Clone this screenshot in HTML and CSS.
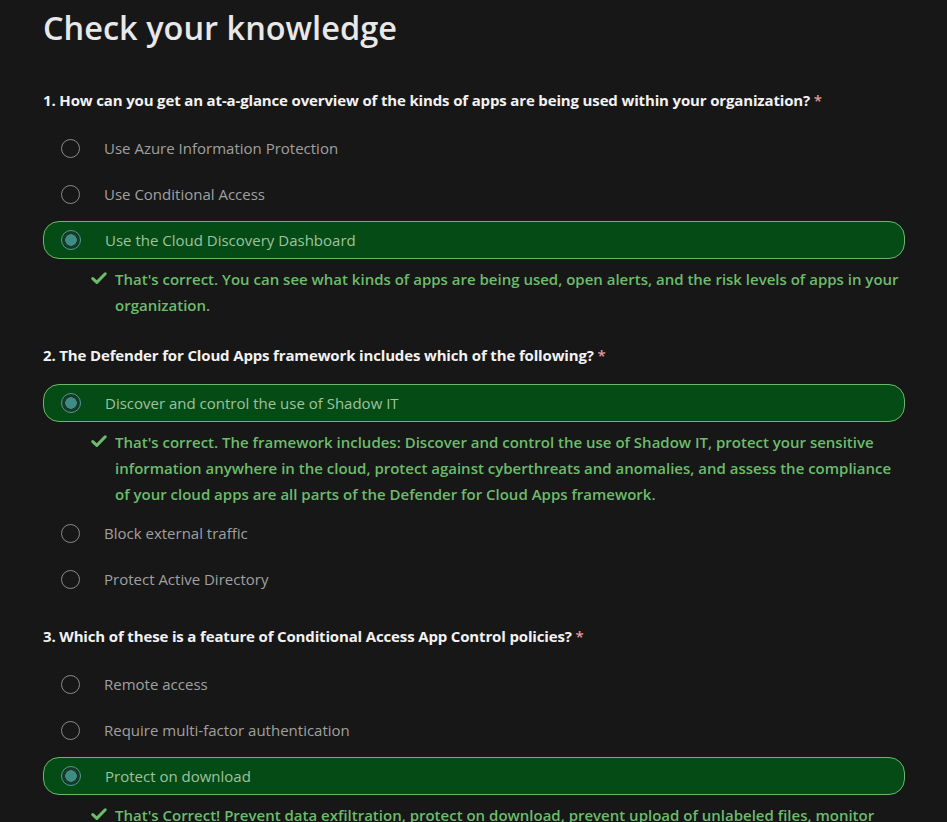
FILE: index.html
```html
<!DOCTYPE html>
<html lang="en">
<head>
<meta charset="utf-8">
<title>Check your knowledge</title>
<link rel="stylesheet" href="styles.css">
</head>
<body>
<main class="quiz">
  <h1 class="title">Check your knowledge</h1>

  <section class="question">
    <p class="q-text">1. How can you get an at-a-glance overview of the kinds of apps are being used within your organization? <span class="req">*</span></p>
    <div class="options">
      <div class="option"><span class="radio"></span><span class="label">Use Azure Information Protection</span></div>
      <div class="option"><span class="radio"></span><span class="label">Use Conditional Access</span></div>
      <div class="option selected"><span class="radio"></span><span class="label">Use the Cloud Discovery Dashboard</span></div>
      <div class="feedback">
        <svg class="check" viewBox="0 0 16 16" aria-hidden="true"><path d="M1.8 8.6 L5.8 12.4 L14.2 3.8"/></svg>
        <p>That's correct. You can see what kinds of apps are being used, open alerts, and the risk levels of apps in your organization.</p>
      </div>
    </div>
  </section>

  <section class="question">
    <p class="q-text">2. The Defender for Cloud Apps framework includes which of the following? <span class="req">*</span></p>
    <div class="options">
      <div class="option selected"><span class="radio"></span><span class="label">Discover and control the use of Shadow IT</span></div>
      <div class="feedback">
        <svg class="check" viewBox="0 0 16 16" aria-hidden="true"><path d="M1.8 8.6 L5.8 12.4 L14.2 3.8"/></svg>
        <p>That's correct. The framework includes: Discover and control the use of Shadow IT, protect your sensitive information anywhere in the cloud, protect against cyberthreats and anomalies, and assess the compliance of your cloud apps are all parts of the Defender for Cloud Apps framework.</p>
      </div>
      <div class="option"><span class="radio"></span><span class="label">Block external traffic</span></div>
      <div class="option"><span class="radio"></span><span class="label">Protect Active Directory</span></div>
    </div>
  </section>

  <section class="question">
    <p class="q-text">3. Which of these is a feature of Conditional Access App Control policies? <span class="req">*</span></p>
    <div class="options">
      <div class="option"><span class="radio"></span><span class="label">Remote access</span></div>
      <div class="option"><span class="radio"></span><span class="label">Require multi-factor authentication</span></div>
      <div class="option selected"><span class="radio"></span><span class="label">Protect on download</span></div>
      <div class="feedback">
        <svg class="check" viewBox="0 0 16 16" aria-hidden="true"><path d="M1.8 8.6 L5.8 12.4 L14.2 3.8"/></svg>
        <p>That's Correct! Prevent data exfiltration, protect on download, prevent upload of unlabeled files, monitor user sessions for compliance, block access, and block custom activities are all features of Conditional Access App Control policies.</p>
      </div>
    </div>
  </section>
</main>
</body>
</html>
```

FILE: styles.css
```css
html, body {
  margin: 0;
  padding: 0;
  background: #171717;
}

body {
  font-family: "Segoe UI", "Open Sans", "Noto Sans", sans-serif;
  color: #e6e6e6;
}

.quiz {
  padding: 0 42px 0 43px;
  display: flex;
  flex-direction: column;
  gap: 27px;
}

.title {
  margin: 6px 0 12px 0;
  font-size: 32.5px;
  font-weight: 600;
  line-height: 44px;
  color: #e8e8e8;
}

.question {
  display: flex;
  flex-direction: column;
  gap: 18px;
}

.q-text {
  margin: 0;
  font-size: 15px;
  font-weight: 700;
  line-height: 22px;
  letter-spacing: -0.15px;
  color: #f2f2f2;
}

.req {
  color: #e59a9a;
  font-weight: 600;
}

.options {
  display: flex;
  flex-direction: column;
  gap: 8px;
}

.option {
  height: 36px;
  display: flex;
  align-items: center;
  gap: 24px;
  padding-left: 17px;
  border: 1px solid transparent;
  border-radius: 16px;
  font-size: 15px;
  color: #a0a0a0;
}

.radio {
  width: 17px;
  height: 17px;
  border: 1.5px solid #8a8a8a;
  border-radius: 50%;
  flex: none;
  box-sizing: content-box;
}

.option.selected {
  background: #054b16;
  border-color: #6bb86b;
  color: #9fc29f;
}

.option.selected .radio {
  width: 18px;
  height: 18px;
  border: 1px solid #4f9a93;
  background: radial-gradient(circle, #3f8c87 0 5.5px, #163a26 6px);
}

.feedback {
  display: flex;
  align-items: flex-start;
  margin: -1px 0;
  padding-left: 48px;
  gap: 8px;
}

.check {
  flex: none;
  width: 16px;
  height: 16px;
  margin-top: 4px;
  fill: none;
  stroke: #6cbc6c;
  stroke-width: 3;
  stroke-linecap: round;
  stroke-linejoin: round;
}

.feedback p {
  margin: 0;
  font-size: 15px;
  font-weight: 600;
  line-height: 26px;
  color: #6cbc6c;
}
```
